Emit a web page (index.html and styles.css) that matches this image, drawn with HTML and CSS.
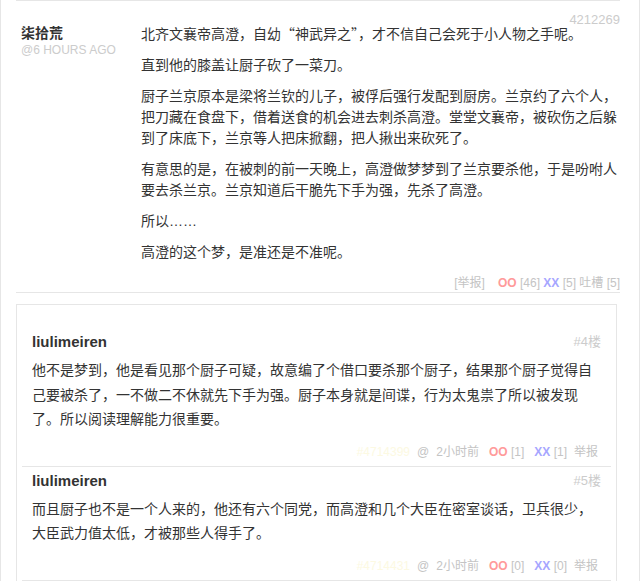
FILE: index.html
```html
<!DOCTYPE html>
<html lang="zh-CN">
<head>
    <meta charset="UTF-8">
    <meta name="viewport" content="width=device-width, initial-scale=1.0">
    <title>柒拾荒</title>
    <link rel="stylesheet" href="styles.css">
</head>
<body>
    <div class="page">
        <div class="post">
            <div class="post-id">4212269</div>
            <div class="post-row">
                <div class="author">
                    <div class="author-name">柒拾荒</div>
                    <div class="author-time">@6 hours ago</div>
                </div>
                <div class="content">
                    <p>北齐文襄帝高澄，自幼<span class="cjk">“</span>神武异之<span class="cjk">”</span>，才不信自己会死于小人物之手呢。</p>
                    <p>直到他的膝盖让厨子砍了一菜刀。</p>
                    <p>厨子兰京原本是梁将兰钦的儿子，被俘后强行发配到厨房。兰京约了六个人，把刀藏在食盘下，借着送食的机会进去刺杀高澄。堂堂文襄帝，被砍伤之后躲到了床底下，兰京等人把床掀翻，把人揪出来砍死了。</p>
                    <p>有意思的是，在被刺的前一天晚上，高澄做梦梦到了兰京要杀他，于是吩咐人要去杀兰京。兰京知道后干脆先下手为强，先杀了高澄。</p>
                    <p>所以……</p>
                    <p>高澄的这个梦，是准还是不准呢。</p>
                </div>
            </div>
            <div class="post-foot"><span class="report">[举报]</span><b class="oo">OO</b> [46] <b class="xx">XX</b> [5] 吐槽 [5]</div>
        </div>

        <div class="comments">
            <div class="comment">
                <div class="comment-head">
                    <span class="comment-name">liulimeiren</span>
                    <span class="comment-floor">#4楼</span>
                </div>
                <div class="comment-body">他不是梦到，他是看见那个厨子可疑，故意编了个借口要杀那个厨子，结果那个厨子觉得自己要被杀了，一不做二不休就先下手为强。厨子本身就是间谍，行为太鬼祟了所以被发现了。所以阅读理解能力很重要。</div>
                <div class="comment-foot"><span class="cid">#4714399</span><span>@</span><span>2小时前</span><span class="vote"><b class="oo">OO</b> [1]</span><span class="vote"><b class="xx">XX</b> [1]</span><span>举报</span></div>
            </div>
            <div class="comment">
                <div class="comment-head">
                    <span class="comment-name">liulimeiren</span>
                    <span class="comment-floor">#5楼</span>
                </div>
                <div class="comment-body">而且厨子也不是一个人来的，他还有六个同党，而高澄和几个大臣在密室谈话，卫兵很少，大臣武力值太低，才被那些人得手了。</div>
                <div class="comment-foot"><span class="cid">#4714431</span><span>@</span><span>2小时前</span><span class="vote"><b class="oo">OO</b> [0]</span><span class="vote"><b class="xx">XX</b> [0]</span><span>举报</span></div>
            </div>
        </div>
    </div>
</body>
</html>
```

FILE: styles.css
```css
body {
    margin: 0;
    font-family: "Liberation Sans", "Noto Sans CJK SC", sans-serif;
    font-size: 14px;
    color: #333;
    background-color: #fff;
}

.page {
    width: 638px;
    min-height: 581px;
    border-left: 1px solid #e6e6e6;
    border-right: 1px solid #e6e6e6;
}

.post {
    width: 604px;
    margin-left: 15px;
    padding-top: 11px;
    border-top: 1px solid #e6e6e6;
    border-bottom: 1px solid #e6e6e6;
}

.post-id {
    text-align: right;
    font-size: 13px;
    line-height: 16px;
    color: #ccc;
}

.post-row {
    display: flex;
    margin-top: -5px;
}

.author {
    width: 125px;
    padding-left: 5px;
    box-sizing: border-box;
}

.author-name {
    font-weight: bold;
    line-height: 21px;
}

.author-time {
    margin-top: -2px;
    font-size: 12px;
    line-height: 16px;
    color: #ccc;
    text-transform: uppercase;
}

.content {
    width: 479px;
}

.content p {
    margin: 0 0 10px;
    line-height: 21px;
}

.cjk {
    font-family: "Noto Sans CJK SC", sans-serif;
}

.post-foot {
    margin-top: 1px;
    text-align: right;
    font-size: 12px;
    line-height: 18px;
    color: #c4c4c4;
}

.post-foot .report {
    margin-right: 13px;
}

.oo {
    color: #ff9a9a;
}

.xx {
    color: #a6a6ff;
}

.comments {
    width: 601px;
    margin: 11px 0 0 15px;
    padding: 23px 5px 0;
    box-sizing: border-box;
    border: 1px solid #e6e6e6;
    border-bottom: none;
}

.comment {
    padding: 4px 10px;
    border-bottom: 1px solid #e6e6e6;
}

.comment-head {
    display: flex;
    justify-content: space-between;
    line-height: 20px;
}

.comment-name {
    font-size: 15px;
    font-weight: bold;
}

.comment-floor {
    font-size: 13px;
    color: #ccc;
}

.comment-body {
    margin: 6px 0 10px;
    line-height: 24.5px;
}

.comment-foot {
    padding-right: 3px;
    text-align: right;
    font-size: 12px;
    line-height: 20px;
    color: #c4c4c4;
}

.comment-foot span {
    margin-left: 7px;
}

.comment-foot .vote {
    margin-left: 10px;
}

.comment-foot .cid {
    color: #fcf9e2;
}
```
